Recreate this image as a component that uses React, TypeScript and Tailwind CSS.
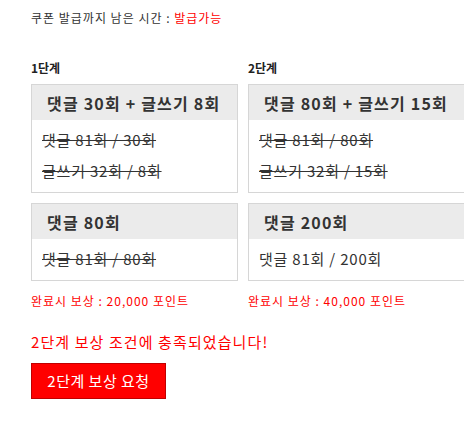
import React from "react";

const font = { fontFamily: '"Noto Sans CJK KR", "Liberation Sans", sans-serif' };

function Box({ title, rows, done }: { title: string; rows: string[]; done: boolean }) {
  return (
    <div className="border border-[#d6d6d6] bg-white">
      <div className="h-[35px] bg-[#ebebeb] pl-[15px] flex items-center text-[16px] font-bold text-[#333] tracking-[1.2px] whitespace-nowrap">
        {title}
      </div>
      <div className="pt-[5px] pb-[5px] pl-[10px]">
        {rows.map((r) => (
          <div
            key={r}
            className={`h-[31px] flex items-center text-[15px] text-[#333] tracking-[0.8px] whitespace-nowrap ${done ? "line-through" : ""}`}
          >
            {r}
          </div>
        ))}
      </div>
    </div>
  );
}

function Column({
  label,
  width,
  a,
  b,
  reward,
}: {
  label: string;
  width: string;
  a: { title: string; rows: string[]; done: boolean };
  b: { title: string; rows: string[]; done: boolean };
  reward: string;
}) {
  return (
    <div className={`${width} shrink-0 flex flex-col`}>
      <div className="h-[16px] leading-[16px] text-[12px] font-bold text-[#222] mb-[8px]">{label}</div>
      <Box {...a} />
      <div className="h-[10px]" />
      <Box {...b} />
      <div className="mt-[12px] h-[16px] leading-[16px] text-[12px] text-[#ff0000] tracking-[1px] whitespace-nowrap">{reward}</div>
    </div>
  );
}

export default function App() {
  return (
    <div className="w-[464px] h-[446px] overflow-hidden bg-white" style={font}>
      <div className="pl-[31px] pt-[10px]">
        <div className="h-[16px] leading-[16px] text-[12px] text-[#333] tracking-[1px] whitespace-nowrap">
          쿠폰 발급까지 남은 시간 : <span className="text-[#ff0000]">발급가능</span>
        </div>
        <div className="mt-[34px] flex gap-[10px]">
          <Column
            label="1단계"
            width="w-[207px]"
            a={{ title: "댓글 30회 + 글쓰기 8회", rows: ["댓글 81회 / 30회", "글쓰기 32회 / 8회"], done: true }}
            b={{ title: "댓글 80회", rows: ["댓글 81회 / 80회"], done: true }}
            reward="완료시 보상 : 20,000 포인트"
          />
          <Column
            label="2단계"
            width="w-[240px]"
            a={{ title: "댓글 80회 + 글쓰기 15회", rows: ["댓글 81회 / 80회", "글쓰기 32회 / 15회"], done: true }}
            b={{ title: "댓글 200회", rows: ["댓글 81회 / 200회"], done: false }}
            reward="완료시 보상 : 40,000 포인트"
          />
        </div>
        <div className="mt-[23px] h-[20px] leading-[20px] text-[15px] text-[#ff0000] tracking-[1.1px] whitespace-nowrap">
          2단계 보상 조건에 충족되었습니다!
        </div>
        <button className="mt-[11px] w-[135px] h-[36px] bg-[#ff0000] border border-[#c00000] text-white text-[15px] tracking-[0.5px] flex items-center justify-center">
          2단계 보상 요청
        </button>
      </div>
    </div>
  );
}
